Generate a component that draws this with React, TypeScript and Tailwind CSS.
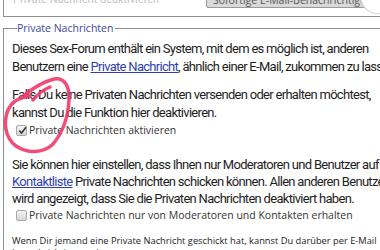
import React from 'react';

const Check: React.FC<{ checked?: boolean }> = ({ checked }) => (
  <span className="relative inline-flex size-[11px] shrink-0 items-center justify-center rounded-[2px] border border-[#a8a8a8] bg-gradient-to-b from-[#f4f4f4] to-[#d6d6d6]">
    {checked && (
      <svg viewBox="0 0 12 12" className="absolute -top-[1px] left-0 size-[11px]">
        <path d="M2.5 6.2 L5 8.8 L9.8 2.4" fill="none" stroke="#3a3a3a" strokeWidth="1.8" />
      </svg>
    )}
  </span>
);

const bodyText = "text-[13px] tracking-[-0.7px] whitespace-nowrap text-[#1e1e1e]";
const labelText = "font-['Open_Sans',sans-serif] text-[10.5px] leading-[13px] text-[#333] whitespace-nowrap";

export default function App() {
  return (
    <div className="relative h-[250px] w-[380px] overflow-hidden bg-white font-['Roboto',sans-serif]">
      {/* previous fieldset, cut off at the top */}
      <div className="relative ml-[3px] h-[17px] border-b border-l border-[#8c8c8c]">
        <div className="absolute -top-[8px] left-[9px] text-[11px] text-[#c4c4c4]">Private Nachricht deaktivieren</div>
        <div className="absolute -top-[7px] left-[202px] whitespace-nowrap rounded-b-[2px] border border-[#9a9a9a] bg-[#d9d9d9] px-[6px] text-[10.5px] leading-[13px] text-[#555] font-['Open_Sans',sans-serif]">
          Sofortige E-Mail-Benachrichtigung
        </div>
        <div className="absolute -top-[12px] right-[-8px] h-[26px] w-[28px] rounded-bl-[18px] border-b border-l border-[#d4d4d4] bg-white" />
      </div>

      <fieldset className="ml-[3px] mt-[5px] border-l border-t border-[#8c8c8c] pl-[8px]">
        <legend className="ml-[5px] pr-[2px] text-[10.5px] leading-[13px] text-[#3c4aa0] font-['Open_Sans',sans-serif]">Private Nachrichten</legend>
        <div className={`${bodyText} leading-[18px]`}>
          <p className="mt-[5px]">Dieses Sex-Forum enthält ein System, mit dem es möglich ist, anderen</p>
          <p>
            Benutzern eine <span className="text-[#2f3fb0] underline">Private Nachricht</span>, ähnlich einer E-Mail, zukommen zu lassen.
          </p>
          <p className="mt-[10px]">Falls Du keine Privaten Nachrichten versenden oder erhalten möchtest,</p>
          <p>kannst Du die Funktion hier deaktivieren.</p>
        </div>
        <label className={`${labelText} mt-[2px] ml-[4px] flex items-center gap-[2px]`}>
          <Check checked />
          Private Nachrichten aktivieren
        </label>
        <div className={`${bodyText} mt-[19px] leading-[17px]`}>
          <p>Sie können hier einstellen, dass Ihnen nur Moderatoren und Benutzer auf Ihrer</p>
          <p>
            <span className="text-[#2f3fb0] underline">Kontaktliste</span> Private Nachrichten schicken können. Allen anderen Benutzern
          </p>
          <p>wird angezeigt, dass Sie die Privaten Nachrichten deaktiviert haben.</p>
        </div>
        <label className={`${labelText} mt-[2px] ml-[4px] flex items-center gap-[2px]`}>
          <Check />
          Private Nachrichten nur von Moderatoren und Kontakten erhalten
        </label>
        <div className="mt-[13px] whitespace-nowrap font-['Open_Sans',sans-serif] text-[9.3px] leading-[12px] text-[#222]">
          <p>Wenn Dir jemand eine Private Nachricht geschickt hat, kannst Du darüber per E-Mail</p>
          <p>benachrichtigt werden.</p>
        </div>
      </fieldset>

      {/* hand-drawn red marker circle */}
      <svg className="pointer-events-none absolute left-0 top-0" width="380" height="250" viewBox="0 0 380 250">
        <path
          d="M21 98 C30 90 42 82 54 79 C64 77 70 86 69 100 C68 118 62 134 52 145 C43 153 28 154 16 146 C5 138 3 122 8 110 C12 101 20 97 30 96 M33 100 C37 95 43 90 50 87"
          fill="none"
          stroke="#f03a6a"
          strokeWidth="3.5"
          strokeLinecap="round"
          strokeLinejoin="round"
          opacity="0.9"
        />
      </svg>
    </div>
  );
}
